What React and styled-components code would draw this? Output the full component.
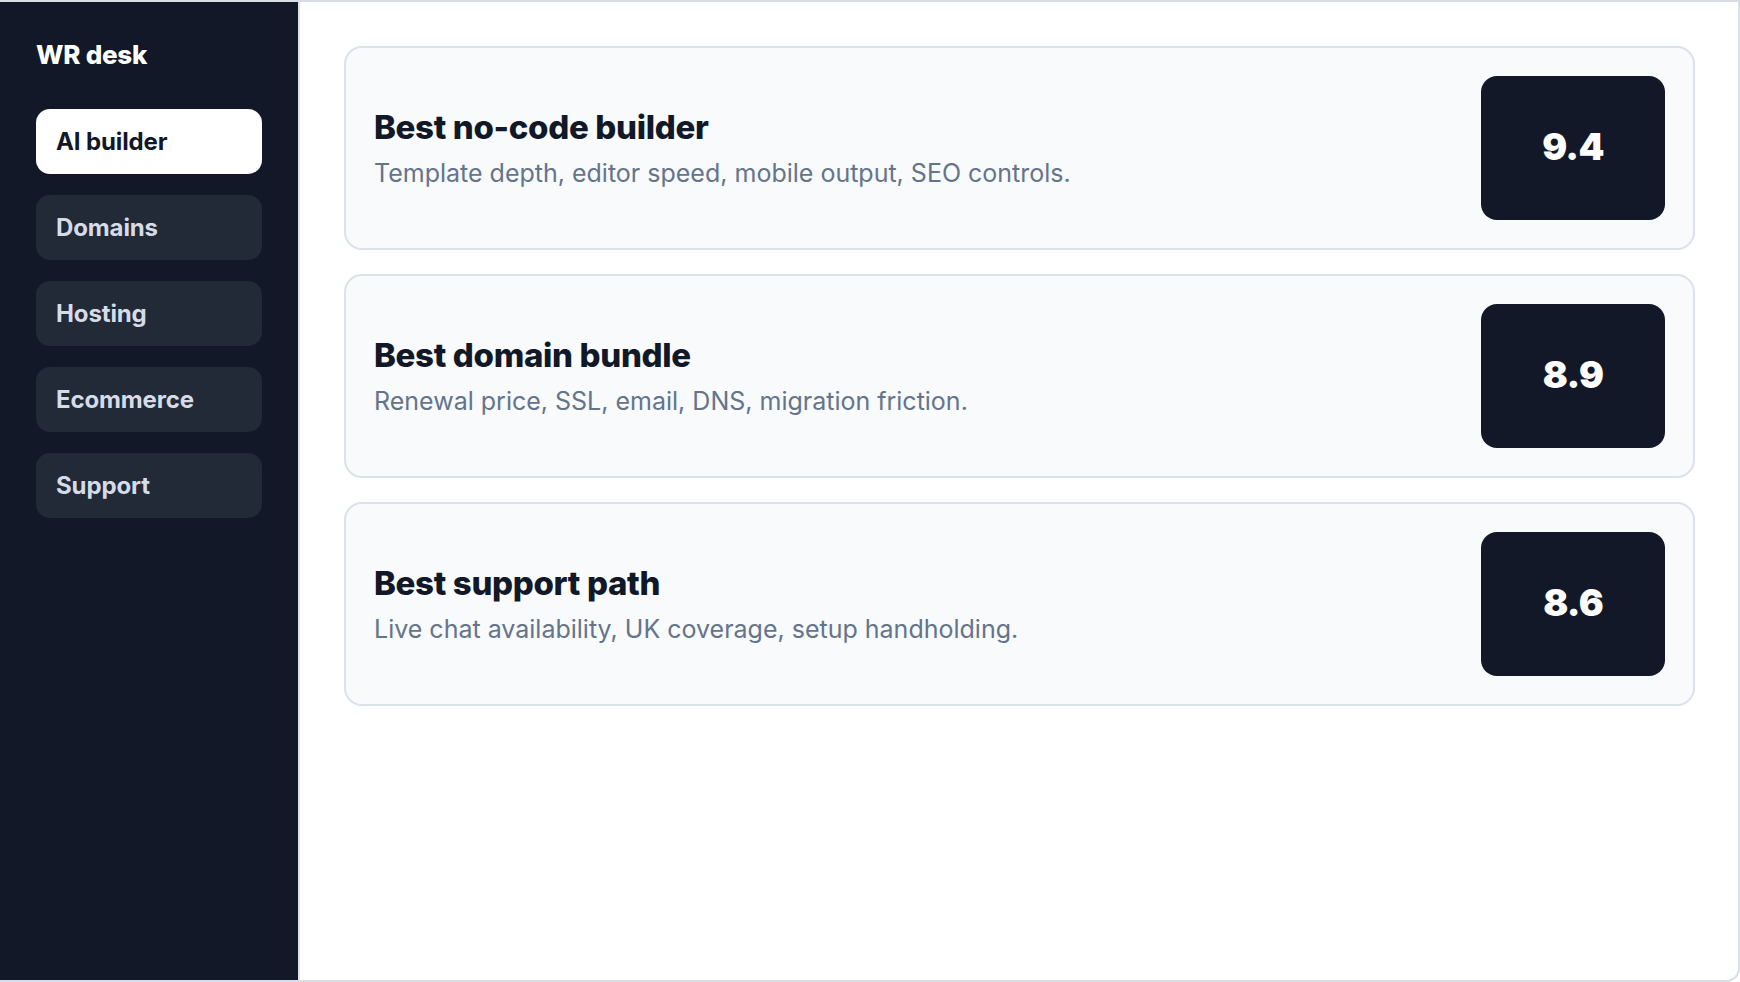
import React from "react";
import styled, { createGlobalStyle } from "styled-components";

const Global = createGlobalStyle`
  html, body { margin: 0; padding: 0; background: #ffffff; }
  body { font-family: Inter, "Noto Sans", "Liberation Sans", sans-serif; -webkit-font-smoothing: antialiased; }
  * { box-sizing: border-box; }
`;

const Frame = styled.div`
  display: flex;
  width: 1740px;
  height: 982px;
  border: 2px solid #d8dee8;
  border-left: none;
  border-radius: 0 0 14px 0;
  overflow: hidden;
  background: #ffffff;
`;

const Sidebar = styled.aside`
  flex: 0 0 300px;
  display: flex;
  flex-direction: column;
  padding: 38px 36px 0 36px;
  background: #121827;
  border-right: 2px solid #dfe4ec;
`;

const Brand = styled.div`
  font-size: 26px;
  font-weight: 800;
  line-height: 29px;
  color: #ffffff;
  letter-spacing: -0.01em;
  margin-bottom: 40px;
`;

const Nav = styled.nav`
  display: flex;
  flex-direction: column;
  gap: 21px;
`;

const NavItem = styled.div`
  height: 65px;
  display: flex;
  align-items: center;
  padding: 0 20px;
  border-radius: 14px;
  font-size: 24px;
  font-weight: 700;
  letter-spacing: -0.005em;
  background: ${(p) => (p.$active ? "#ffffff" : "#222937")};
  color: ${(p) => (p.$active ? "#111827" : "#d6dce7")};
`;

const Main = styled.main`
  flex: 1;
  display: flex;
  flex-direction: column;
  gap: 24px;
  padding: 44px 43px 44px 44px;
`;

const Card = styled.section`
  display: flex;
  align-items: center;
  justify-content: space-between;
  padding: 28px;
  background: #f8fafc;
  border: 2px solid #dbe2ec;
  border-radius: 18px;
`;

const Text = styled.div`
  display: flex;
  flex-direction: column;
  padding-top: 3px;
`;

const Title = styled.h2`
  margin: 0;
  font-size: 33px;
  font-weight: 800;
  line-height: 1.2;
  letter-spacing: -0.01em;
  color: #111827;
`;

const Subtitle = styled.p`
  margin: 9px 0 0 0;
  font-size: 25px;
  font-weight: 400;
  line-height: 1.35;
  color: #64748b;
`;

const Score = styled.div`
  flex: 0 0 184px;
  height: 144px;
  display: flex;
  align-items: center;
  justify-content: center;
  padding-bottom: 4px;
  border-radius: 16px;
  background: #121827;
  color: #ffffff;
  font-size: 37px;
  font-weight: 900;
  letter-spacing: -0.02em;
`;

const nav = ["AI builder", "Domains", "Hosting", "Ecommerce", "Support"];

const cards = [
  { title: "Best no-code builder", text: "Template depth, editor speed, mobile output, SEO controls.", score: "9.4" },
  { title: "Best domain bundle", text: "Renewal price, SSL, email, DNS, migration friction.", score: "8.9" },
  { title: "Best support path", text: "Live chat availability, UK coverage, setup handholding.", score: "8.6" },
];

export default function App() {
  return (
    <>
      <Global />
      <Frame>
        <Sidebar>
          <Brand>WR desk</Brand>
          <Nav>
            {nav.map((n, i) => (
              <NavItem key={n} $active={i === 0}>{n}</NavItem>
            ))}
          </Nav>
        </Sidebar>
        <Main>
          {cards.map((c) => (
            <Card key={c.title}>
              <Text>
                <Title>{c.title}</Title>
                <Subtitle>{c.text}</Subtitle>
              </Text>
              <Score>{c.score}</Score>
            </Card>
          ))}
        </Main>
      </Frame>
    </>
  );
}
